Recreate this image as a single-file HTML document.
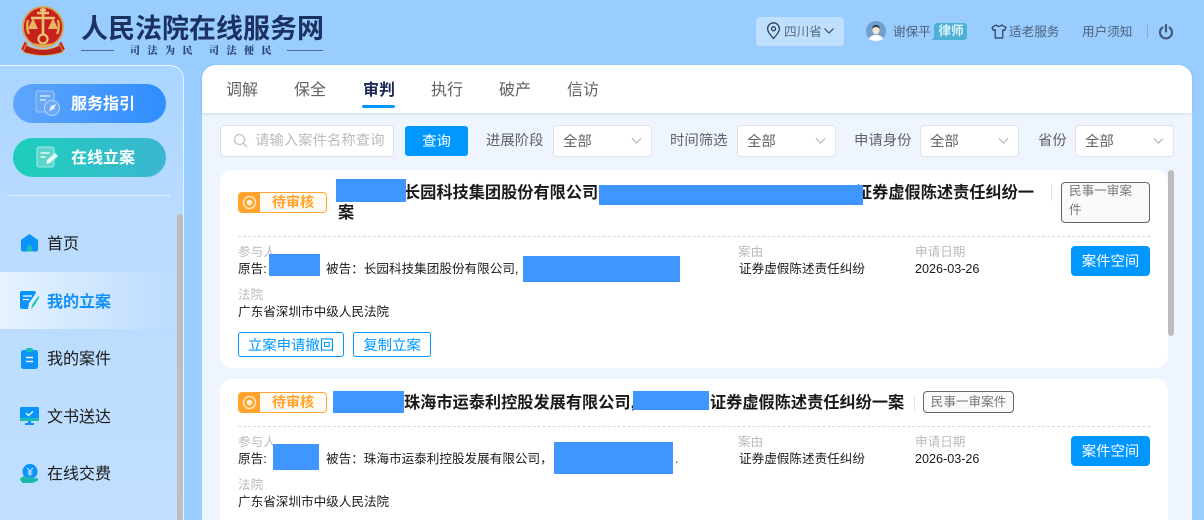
<!DOCTYPE html>
<html lang="zh"><head><meta charset="utf-8"><style>
*{box-sizing:border-box;margin:0;padding:0}
html,body{width:1204px;height:520px;overflow:hidden}
body{position:relative;background:#99ccff;font-family:"Liberation Sans","Noto Sans CJK SC",sans-serif;color:#1a1a1a}
.a{position:absolute;white-space:nowrap}
svg{position:absolute;display:block}
.t12{font-size:12.6px;line-height:18px}
.mask{position:absolute;background:#4096ff}
.sel{position:absolute;top:125px;width:99px;height:32px;background:#fff;border:1px solid #dfe3ea;border-radius:4px;font-size:14.4px;line-height:32px;color:#606266;padding-left:9px}
.sel svg{right:9px;top:11px}
.lab{position:absolute;top:132px;font-size:14.4px;line-height:18px;color:#606266;white-space:nowrap}
.tab{position:absolute;top:79px;font-size:16px;line-height:23px;color:#606266;white-space:nowrap}
.menu{position:absolute;left:47px;font-size:16px;line-height:22px;color:#1a1a1a;white-space:nowrap}
.card{position:absolute;left:220px;width:948px;background:#fff;border-radius:12px}
.status{position:absolute;left:238px;width:89px;height:21px;border:1px solid #ffa733;border-radius:4px;background:#fffaf3;overflow:hidden}
.status i{position:absolute;left:0;top:0;width:21px;height:21px;background:#ffa32b}
.status b{position:absolute;left:21px;right:0;top:0;text-align:center;font-size:14px;line-height:18px;color:#ffa32b}
.gray{color:#b9bbbf}
.btn{position:absolute;left:1071px;width:79px;height:30px;background:#0097ff;border-radius:4px;color:#fff;font-size:14.4px;line-height:32px;text-align:center}
.obtn{position:absolute;top:332px;height:25px;border:1px solid #0097ff;border-radius:3px;color:#0097ff;font-size:14.4px;line-height:26px;text-align:center;background:#fff}
.dash{position:absolute;left:238px;width:912px;border-top:1px dashed #d9d9d9}
.tag{position:absolute;border:1px solid #666;border-radius:4px;background:#f9fafc;color:#777;font-size:12.6px}
.ttl{position:absolute;font-size:16.2px;font-weight:700;line-height:23px;color:#1a1a1a;white-space:nowrap}
</style></head><body>

<!-- logo -->
<svg style="left:20px;top:5px" width="46" height="52" viewBox="0 0 46 52">
<path d="M5 36L1 44l6 5 4-4zM41 36l4 8-6 5-4-4z" fill="#c9241c" stroke="#e0a94a" stroke-width=".5"/>
<path d="M6 40q17 9 34 0l3 7q-20 7-40 0z" fill="#b8241b" stroke="#e0a94a" stroke-width=".8"/>
<circle cx="23" cy="22" r="20" fill="#c8201c" stroke="#d8a04a" stroke-width="1.800"/>
<path d="M4 24q3 16 19 18 16-2 19-18-2 11-9 14l-10 2-10-2q-7-3-9-14z" fill="#e3ae55"/>
<path d="M8 15q-2 8 1 14M38 15q2 8-1 14" stroke="#e3ae55" stroke-width="2.400" fill="none"/>
<path d="M23 3v27M17 8h12M20 5h6M11 13h24" stroke="#edc277" stroke-width="2.600" fill="none"/>
<path d="M13 13l-5 11h10zM33 13l-5 11h10z" fill="#e8b661"/>
<circle cx="23" cy="34" r="4.500" fill="#c8201c" stroke="#edc277" stroke-width="2.200"/>
</svg>
<div class="a" style="left:81px;top:11px;font-size:27px;line-height:36px;font-weight:700;color:#1b3261">人民法院在线服务网</div>
<div class="a" style="left:81px;top:50px;width:33px;border-top:1px solid #50668c"></div>
<div class="a" style="left:130px;top:43px;font-family:'Noto Serif CJK SC',serif;font-size:10px;line-height:14px;font-weight:900;letter-spacing:7.500px;color:#2a4674">司法为民</div>
<div class="a" style="left:209px;top:43px;font-family:'Noto Serif CJK SC',serif;font-size:10px;line-height:14px;font-weight:900;letter-spacing:7.500px;color:#2a4674">司法便民</div>
<div class="a" style="left:287px;top:50px;width:36px;border-top:1px solid #50668c"></div>

<!-- header right -->
<div class="a" style="left:756px;top:17px;width:88px;height:29px;background:#bfdfff;border-radius:4px"></div>
<svg style="left:766px;top:22px" width="15" height="18" viewBox="0 0 15 18"><path d="M7.500 16.500C4 12.500 1.600 9.800 1.600 6.700a5.900 5.900 0 0 1 11.800 0c0 3.100-2.400 5.800-5.900 9.800z" fill="none" stroke="#333f50" stroke-width="1.300"/><circle cx="7.500" cy="6.700" r="2" fill="none" stroke="#333f50" stroke-width="1.300"/></svg>
<div class="a" style="left:784px;top:23px;color:#5c6b80;font-size:12.6px;line-height:18px">四川省</div>
<svg style="left:823px;top:27px" width="12" height="8" viewBox="0 0 12 8"><path d="M1.500 1.500l4.500 4.500 4.500-4.500" fill="none" stroke="#333f50" stroke-width="1.100"/></svg>
<svg style="left:866px;top:21px" width="20" height="20" viewBox="0 0 20 20"><circle cx="10" cy="10" r="10" fill="#6f9fca"/><path d="M3 18q1-4 7-4t7 4q-3 2-7 2t-7-2z" fill="#fff"/><ellipse cx="10" cy="9" rx="3.600" ry="4.500" fill="#f8e3d0"/><path d="M6.300 8q0-4 3.700-4t3.700 4q-1.500-2-3.700-2t-3.700 2z" fill="#2c3a4c"/></svg>
<div class="a t12" style="left:893px;top:23px;color:#4f6078">谢保平</div>
<svg style="left:931px;top:23px" width="36" height="17" viewBox="0 0 36 17"><path d="M6 0h27a3 3 0 0 1 3 3v11a3 3 0 0 1-3 3H0q3-1 3-4V3a3 3 0 0 1 3-3z" fill="#4eb0d5"/></svg>
<div class="a" style="left:935px;top:23px;width:32px;color:#d8f3fb;font-size:12.6px;line-height:17px;text-align:center;font-weight:700">律师</div>
<svg style="left:991px;top:24px" width="16" height="15" viewBox="0 0 16 15"><path d="M5.200 1L1 3.400l1.400 3 1.800-.6V14h7.600V5.800l1.800.6 1.400-3L10.800 1Q8 4 5.200 1z" fill="none" stroke="#2f3b4d" stroke-width="1.200" stroke-linejoin="round"/></svg>
<div class="a t12" style="left:1009px;top:23px;color:#4f6078">适老服务</div>
<div class="a t12" style="left:1082px;top:23px;color:#4f6078">用户须知</div>
<div class="a" style="left:1147px;top:25px;height:13px;border-left:1px solid #84aacf"></div>
<svg style="left:1158px;top:24px" width="16" height="16" viewBox="0 0 16 16"><path d="M4.500 3.500a6 6 0 1 0 7 0M8 1v6.500" fill="none" stroke="#42597a" stroke-width="2.100" stroke-linecap="round"/></svg>

<!-- sidebar -->
<div class="a" style="left:0;top:65px;width:184px;height:470px;background:linear-gradient(180deg,#a9d5ff 0,#b9dbff 30%,#c2dfff 100%);border-top:1px solid #f0f8ff;border-right:1px solid #e5f2ff;border-radius:0 14px 0 0"></div>
<div class="a" style="left:0;top:272px;width:177px;height:57px;background:linear-gradient(90deg,#e6f3ff,#bcdcff)"></div>
<div class="a" style="left:177px;top:214px;width:6px;height:306px;background:#bdbdbd;border-radius:3px 3px 0 0"></div>
<div class="a" style="left:13px;top:84px;width:153px;height:39px;border-radius:20px;background:linear-gradient(90deg,#5fa6fb,#2f8dff)"></div>
<svg style="left:35px;top:90px" width="26" height="27" viewBox="0 0 26 27"><rect x="1" y="1" width="18" height="21" rx="2" fill="#6aa8f8" stroke="#a0c8fb"/><path d="M5 6h10M5 10h6" stroke="#cfe4fd" stroke-width="1.500"/><circle cx="17" cy="18" r="7.500" fill="#6ea9f7" stroke="#b5d6fc"/><path d="M14 21l2-5 5-2-2 5z" fill="#eaf4ff"/></svg>
<div class="a" style="left:71px;top:93px;font-size:16px;line-height:23px;font-weight:700;color:#fff">服务指引</div>
<div class="a" style="left:13px;top:138px;width:153px;height:39px;border-radius:20px;background:linear-gradient(90deg,#1ccfba,#3db6d2)"></div>
<svg style="left:36px;top:145px" width="24" height="24" viewBox="0 0 24 24"><rect x="1" y="2" width="17" height="20" rx="2" fill="#5cd6ca" stroke="#a5ece4"/><path d="M4.500 8h9M4.500 12h5" stroke="#e5fbf8" stroke-width="1.500"/><path d="M10 19l1-4 8-7 3 3-8 7z" fill="#e5fbf8"/></svg>
<div class="a" style="left:71px;top:147px;font-size:16px;line-height:23px;font-weight:700;color:#fff">在线立案</div>
<div class="a" style="left:9px;top:195px;width:161px;border-top:1px solid #e3f1ff"></div>

<svg style="left:20px;top:233px" width="19" height="19" viewBox="0 0 19 19"><path d="M9.500 1L1 7v9.500A2 2 0 0 0 3 18.500h13a2 2 0 0 0 2-2V7z" fill="#0a93fb"/><path d="M7 18.500v-4a2.500 2.500 0 0 1 5 0v4z" fill="#1ac0b2"/></svg>
<div class="menu" style="top:234px">首页</div>
<svg style="left:20px;top:291px" width="20" height="19" viewBox="0 0 20 19"><path d="M2 0h12a2 2 0 0 1 2 2L9 12l-1 6H2a2 2 0 0 1-2-2V2a2 2 0 0 1 2-2z" fill="#0a93fb"/><path d="M3 5h9M3 8.500h6" stroke="#fff" stroke-width="1.300"/><path d="M11 18l1.500-5 6-8 1 1-5.500 9z" fill="#1ac0b2"/></svg>
<div class="menu" style="top:292px;font-weight:700;color:#1390f5">我的立案</div>
<svg style="left:21px;top:348px" width="17" height="21" viewBox="0 0 17 21"><rect x="0" y="2" width="17" height="19" rx="2.500" fill="#0a93fb"/><rect x="5" y="0" width="7" height="4" rx="1.500" fill="#1ac0b2"/><path d="M5 9.500h7M5 13.500h7" stroke="#fff" stroke-width="1.500"/></svg>
<div class="menu" style="top:349px">我的案件</div>
<svg style="left:20px;top:407px" width="19" height="18" viewBox="0 0 19 18"><rect width="19" height="13" rx="1.500" fill="#0a93fb"/><rect y="11" width="19" height="3" fill="#1ac0b2"/><path d="M6 6l2.500 2.500L13 4.500" fill="none" stroke="#fff" stroke-width="1.300"/><path d="M8 14h3v2h3v2H5v-2h3z" fill="#0a93fb"/></svg>
<div class="menu" style="top:407px">文书送达</div>
<svg style="left:20px;top:464px" width="19" height="19" viewBox="0 0 19 19"><circle cx="10" cy="7.500" r="7.500" fill="#0a93fb"/><path d="M7 4l3 3 3-3M10 7v5M7.500 8h5M7.500 10h5" stroke="#cfe8ff" fill="none"/><path d="M0 15q3-4 7-2h4q2 1 0 2l5-1q3 0 2 2-3 3-8 3H3q-2-1-3-4z" fill="#1ab8a8"/></svg>
<div class="menu" style="top:464px">在线交费</div>

<!-- main panel -->
<div class="a" style="left:202px;top:65px;width:990px;height:470px;background:#eef5fe;border-radius:14px 14px 0 0"></div>
<div class="a" style="left:202px;top:65px;width:990px;height:48px;background:#fff;border-radius:14px 14px 0 0;box-shadow:0 1px 3px rgba(100,120,160,.2)"></div>
<div class="tab" style="left:226px">调解</div>
<div class="tab" style="left:294px">保全</div>
<div class="tab" style="left:363px;font-weight:700;color:#1a2a55">审判</div>
<div class="tab" style="left:431px">执行</div>
<div class="tab" style="left:499px">破产</div>
<div class="tab" style="left:567px">信访</div>
<div class="a" style="left:362px;top:105px;width:33px;height:3px;background:#0097ff;border-radius:2px"></div>

<div class="a" style="left:220px;top:125px;width:174px;height:32px;background:#fff;border:1px solid #dcdfe6;border-radius:4px"></div>
<svg style="left:233px;top:133px" width="15" height="15" viewBox="0 0 15 15"><circle cx="6.500" cy="6.500" r="5" fill="none" stroke="#c0c4cc" stroke-width="1.300"/><path d="M10.300 10.300L14 14" stroke="#c0c4cc" stroke-width="1.300"/></svg>
<div class="a" style="left:255px;top:132px;font-size:14.4px;line-height:18px;color:#b9bbc0;width:130px;overflow:hidden">请输入案件名称查询</div>
<div class="a" style="left:405px;top:126px;width:63px;height:30px;background:#0097ff;border-radius:3px;color:#fff;font-size:14.4px;line-height:32px;text-align:center">查询</div>

<div class="lab" style="left:486px">进展阶段</div>
<div class="sel" style="left:553px">全部<svg width="11" height="8" viewBox="0 0 11 8"><path d="M1 1.500l4.500 4.500L10 1.500" fill="none" stroke="#a8abb2"/></svg></div>
<div class="lab" style="left:670px">时间筛选</div>
<div class="sel" style="left:737px">全部<svg width="11" height="8" viewBox="0 0 11 8"><path d="M1 1.500l4.500 4.500L10 1.500" fill="none" stroke="#a8abb2"/></svg></div>
<div class="lab" style="left:854px">申请身份</div>
<div class="sel" style="left:920px">全部<svg width="11" height="8" viewBox="0 0 11 8"><path d="M1 1.500l4.500 4.500L10 1.500" fill="none" stroke="#a8abb2"/></svg></div>
<div class="lab" style="left:1038px">省份</div>
<div class="sel" style="left:1075px">全部<svg width="11" height="8" viewBox="0 0 11 8"><path d="M1 1.500l4.500 4.500L10 1.500" fill="none" stroke="#a8abb2"/></svg></div>

<!-- card 1 -->
<div class="card" style="top:170px;height:198px"></div>
<div class="status" style="top:192px"><i></i><b>待审核</b></div>
<svg style="left:242px;top:195px" width="15" height="15" viewBox="0 0 15 15"><circle cx="7.500" cy="7.500" r="6" fill="none" stroke="#ffe3b8" stroke-width="1.600"/><circle cx="7.500" cy="7.500" r="2.800" fill="#fff1db"/></svg>
<div class="ttl" style="left:404px;top:182px">长园科技集团股份有限公司,</div>
<div class="ttl" style="left:856px;top:182px">证券虚假陈述责任纠纷一</div>
<div class="ttl" style="left:338px;top:202px">案</div>
<div class="mask" style="left:336px;top:179px;width:70px;height:23px"></div>
<div class="mask" style="left:599px;top:185px;width:264px;height:20px"></div>
<div class="a" style="left:1051px;top:184px;height:17px;border-left:1px solid #e2e2e2"></div>
<div class="tag" style="left:1061px;top:182px;width:89px;height:41px;padding:0 6px 0 7px;line-height:19px;white-space:normal"><span style="position:relative;top:-1px">民事一审案件</span></div>
<div class="dash" style="top:236px"></div>
<div class="a t12 gray" style="left:238px;top:243px">参与人</div>
<div class="a t12" style="left:238px;top:260px">原告:</div>
<div class="a t12" style="left:326px;top:260px">被告：长园科技集团股份有限公司,</div>
<div class="mask" style="left:269px;top:254px;width:51px;height:22px"></div>
<div class="mask" style="left:523px;top:256px;width:157px;height:26px"></div>
<div class="a t12 gray" style="left:738px;top:243px">案由</div>
<div class="a t12" style="left:739px;top:260px">证券虚假陈述责任纠纷</div>
<div class="a t12 gray" style="left:915px;top:243px">申请日期</div>
<div class="a t12" style="left:915px;top:260px">2026-03-26</div>
<div class="btn" style="top:246px">案件空间</div>
<div class="a t12 gray" style="left:238px;top:286px">法院</div>
<div class="a t12" style="left:238px;top:303px">广东省深圳市中级人民法院</div>
<div class="obtn" style="left:238px;width:106px">立案申请撤回</div>
<div class="obtn" style="left:353px;width:78px">复制立案</div>
<div class="a" style="left:1168px;top:170px;width:6px;height:166px;background:#bdbdbd;border-radius:3px"></div>

<!-- card 2 -->
<div class="card" style="top:379px;height:160px"></div>
<div class="status" style="top:392px"><i></i><b>待审核</b></div>
<svg style="left:242px;top:395px" width="15" height="15" viewBox="0 0 15 15"><circle cx="7.500" cy="7.500" r="6" fill="none" stroke="#ffe3b8" stroke-width="1.600"/><circle cx="7.500" cy="7.500" r="2.800" fill="#fff1db"/></svg>
<div class="ttl" style="left:404px;top:392px">珠海市运泰利控股发展有限公司,</div>
<div class="ttl" style="left:710px;top:392px">证券虚假陈述责任纠纷一案</div>
<div class="mask" style="left:333px;top:391px;width:71px;height:22px"></div>
<div class="mask" style="left:633px;top:391px;width:76px;height:19px"></div>
<div class="a" style="left:914px;top:395px;height:16px;border-left:1px solid #e2e2e2"></div>
<div class="tag" style="left:923px;top:391px;width:91px;height:22px;text-align:center;line-height:20px">民事一审案件</div>
<div class="dash" style="top:426px"></div>
<div class="a t12 gray" style="left:238px;top:433px">参与人</div>
<div class="a t12" style="left:238px;top:450px">原告:</div>
<div class="a t12" style="left:326px;top:450px">被告：珠海市运泰利控股发展有限公司，</div>
<div class="mask" style="left:273px;top:444px;width:46px;height:26px"></div>
<div class="mask" style="left:554px;top:442px;width:119px;height:32px"></div>
<div class="a t12" style="left:675px;top:450px;color:#555">.</div>
<div class="a t12 gray" style="left:738px;top:433px">案由</div>
<div class="a t12" style="left:739px;top:450px">证券虚假陈述责任纠纷</div>
<div class="a t12 gray" style="left:915px;top:433px">申请日期</div>
<div class="a t12" style="left:915px;top:450px">2026-03-26</div>
<div class="btn" style="top:436px">案件空间</div>
<div class="a t12 gray" style="left:238px;top:476px">法院</div>
<div class="a t12" style="left:238px;top:493px">广东省深圳市中级人民法院</div>
</body></html>
